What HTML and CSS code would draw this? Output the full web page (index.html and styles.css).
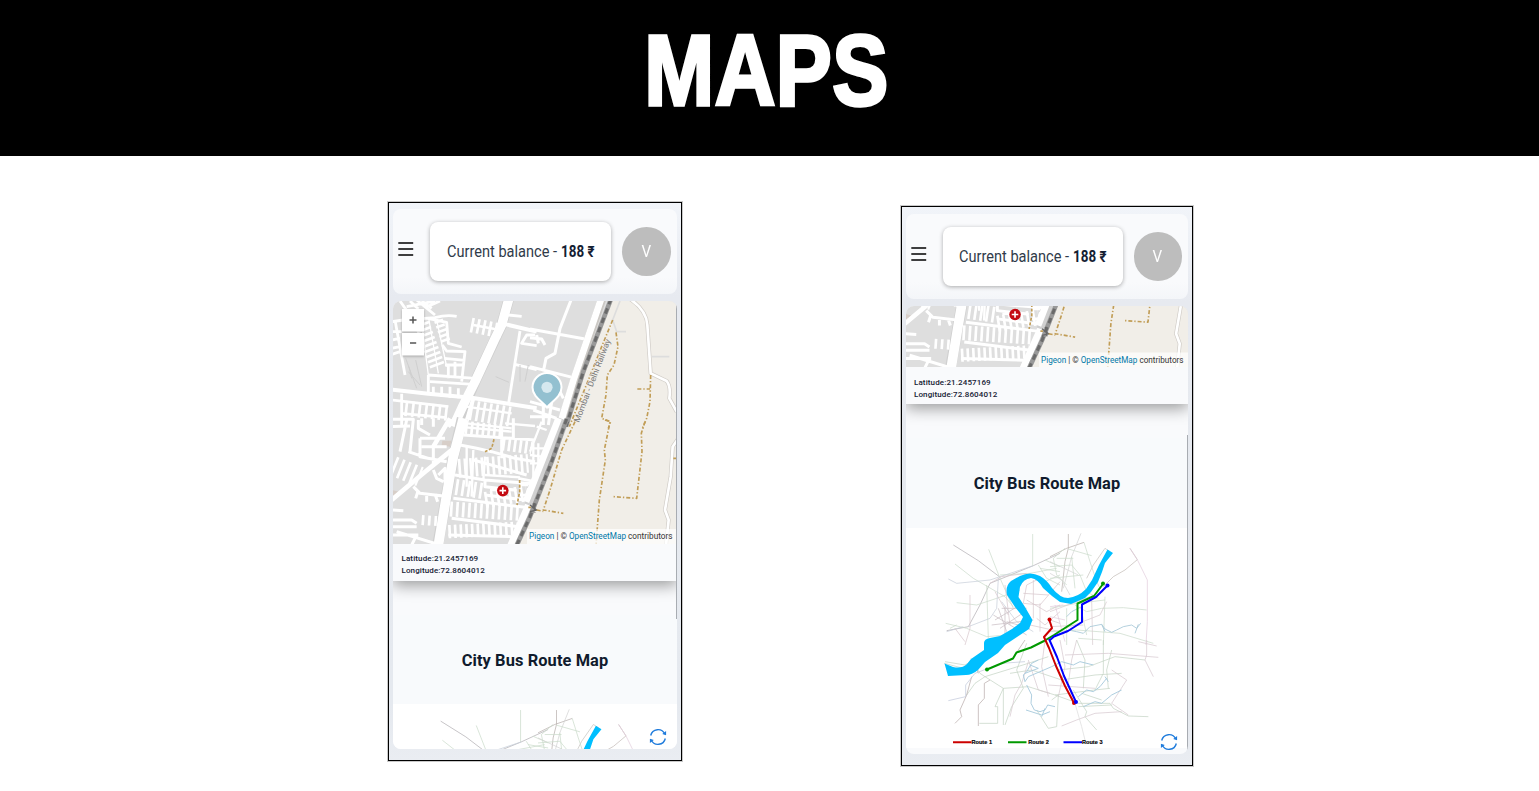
FILE: index.html
```html
<!DOCTYPE html>
<html lang="en">
<head>
<meta charset="utf-8">
<title>Maps</title>
<link rel="stylesheet" href="styles.css">
</head>
<body>
<svg class="defs" width="0" height="0" aria-hidden="true">
  <defs>
    <g id="street-map" fill="none" stroke-linejoin="round">
      <path fill="#dedede" d="M393 301H677V544H393z"/>
      <path fill="#f1eee8" d="M609 301H677V544H520L568 425z"/>
      <!-- north west -->
      <g transform="translate(385 295) scale(.33333)" stroke="#fff" stroke-width="8.5">
        <path stroke="#cfcfcf" stroke-width="32" d="M372 10L350 90L270 260L215 390"/>
        <path stroke-width="28" d="M372 10L350 90L328 135L270 260L235 330L205 395"/>
        <path stroke-width="12" d="M20 284L130 296L260 308L380 328L455 340M350 85L455 110M190 395L240 330M240 395L265 310"/>
        <path d="M20 80L55 75L150 68Q185 58 215 64M45 18L85 75M65 35L150 18M75 18L100 42M95 15L150 60M120 38L165 18M110 18L140 40M30 75L60 240M20 110H50M20 135L45 130M20 160L45 155M20 178L45 170M128 70L185 82L190 145L230 156M172 150L185 168L240 170L230 260M130 240L270 250M135 260L265 268M130 240L130 296M180 210H235M178 190L240 196M190 210V250M210 200V250M405 108L370 330M390 208L455 224M450 120H425L410 145L455 152M370 60L410 64M50 296V395M20 315L190 335M48 355L185 368M145 275V300M170 275V305M195 275V308M220 280V310"/>
        <path stroke-width="45" stroke-dasharray="8 8" d="M110 85L160 220"/>
        <path stroke-width="27" stroke-dasharray="8 7" d="M160 75L185 145"/>
        <path stroke-width="4" d="M110 85L130 240M132 75L160 235M155 75L185 215"/>
        <path stroke-width="44" stroke-dasharray="8 10" d="M258 90L350 108"/>
        <path stroke-width="7" d="M265 90L345 105"/>
        <path stroke-width="46" stroke-dasharray="8 12" d="M60 340L190 355"/>
        <path stroke-width="60" stroke-dasharray="8 11" d="M255 345L375 365"/>
        <path stroke-width="7" d="M245 335L380 355M245 385L380 400"/>
        <path stroke="#cfcfcf" stroke-width="3" d="M62 190L95 280M92 195L110 275M70 230L105 270M405 210V260M430 210L420 260M332 245L372 262M72 215L80 250"/>
      </g>
      <!-- north east -->
      <g transform="translate(530 295) scale(.33333)">
        <g stroke="#fff" stroke-width="9">
          <path d="M125 10L90 100L75 175L48 190L40 230M0 102L165 132M0 215L130 248M0 128L35 132L45 150M20 120L25 145M0 320L90 345M10 345L80 370M40 310V390M65 320L55 390M0 365H60M85 280L100 310"/>
          <path stroke="#cbc8c4" stroke-width="25" d="M217 10L135 250L92 395"/>
          <path stroke-width="20" d="M214 10L132 250L88 395"/>
          <path stroke="#d0ccc7" stroke-width="12" d="M297 10Q350 45 352 90L362 235L410 258Q423 275 418 310L440 350"/>
          <path stroke-width="8" d="M297 10Q350 45 352 90L362 235L410 258Q423 275 418 310L440 350"/>
        </g>
        <path stroke="#ddd" stroke-width="5" d="M270 18L248 75L260 110H288M365 185H418"/>
        <path stroke="#999" stroke-width="14" d="M243 12L160 230L108 395"/>
        <path stroke="#6a6a6a" stroke-width="9" stroke-dasharray="17 13" d="M243 12L160 230L108 395"/>
        <g stroke="#c19d56" stroke-width="5" stroke-dasharray="12 6 4 6">
          <path d="M248 75L215 155L165 280L118 395M258 112L264 155L252 210L232 240L228 300L215 370L242 380L235 400M362 240L360 320L350 370L337 400M322 282H360"/>
        </g>
        <text class="rail-label" transform="translate(147 384) rotate(-69)" textLength="265" lengthAdjust="spacingAndGlyphs">Mombai - Delhi Railway</text>
      </g>
      <!-- south west -->
      <g transform="translate(385 420) scale(.33333)" stroke="#fff" stroke-width="9">
        <path fill="#d7cec8" stroke="none" d="M172 62L200 62L195 80L170 76zM22 210L45 216L25 235z"/>
        <path stroke="#d0d0d0" stroke-width="33" d="M232 -5L205 110L185 225L158 376"/>
        <path stroke-width="29" d="M235 -5L205 110L185 225L160 376"/>
        <path stroke-width="14" d="M195 -5L145 80M20 240L115 160L210 82"/>
        <path d="M20 -2H85L75 95M65 0L45 95M20 20L75 18M100 0V25L135 45M110 -5V15M145 -5V20M105 55H180M105 55V110L185 125M145 75V130M110 80H185M70 95L130 115M235 45L450 60M225 75L275 85L320 95L390 115L450 125M350 20V115M385 -5V60M265 120L425 165M210 165L300 180L450 192M300 180V200L390 210M205 235L420 262M200 295L400 320M190 345L380 350M300 225L420 240M85 200L105 220L175 228M100 210L92 235M125 222V245M150 222L158 245M145 150L155 175L175 185M160 165L180 145V190M20 270L55 272M20 300H80L95 310M20 320H95M20 345H100M35 335L155 372M80 375L90 355"/>
        <path stroke-width="60" stroke-dasharray="8 12" d="M25 138L105 170"/>
        <path stroke-width="30" stroke-dasharray="8 11" d="M110 300L168 304"/>
        <path stroke-width="38" stroke-dasharray="8 9" d="M240 22L350 33M352 72L440 84"/>
        <path stroke-width="56" stroke-dasharray="8 9" d="M220 145L430 130"/>
        <path stroke-width="48" stroke-dasharray="8 10" d="M212 201L300 214M300 240L425 220"/>
        <path stroke-width="45" stroke-dasharray="8 10" d="M195 267L405 280"/>
        <path stroke-width="40" stroke-dasharray="8 9" d="M190 335L395 325"/>
        <path stroke-width="7" d="M245 80V200M265 90L260 230M300 110L295 180M220 20L380 35M360 10L450 18M300 165L405 172M315 210H395"/>
        <path stroke-width="20" d="M470 165L375 380"/>
        <path stroke-width="8" d="M405 195H430M405 225H430M400 175L450 185M430 205L420 240"/>
        <path stroke="#c19d56" stroke-width="5" stroke-dasharray="9 5" d="M327 58L320 85L300 95M404 180L404 215L396 255M430 262H450"/>
      </g>
      <!-- south east -->
      <g transform="translate(530 420) scale(.33333)">
        <path stroke="#fff" stroke-width="7" d="M0 85H45M0 105L35 110M0 130H30M35 5L0 95M20 20L50 30M10 60V170M25 70V130"/>
        <path stroke="#d0d0d0" stroke-width="24" d="M92 -5L-5 255"/>
        <path stroke="#fff" stroke-width="20" d="M86 -5L-12 245"/>
        <path stroke="#999" stroke-width="14" d="M110 -3L65 125L0 290L-40 376"/>
        <path stroke="#6a6a6a" stroke-width="9" stroke-dasharray="17 13" d="M110 -3L65 125L0 290L-40 376"/>
        <path stroke="#666" stroke-width="4" d="M0 255L20 270L0 275M10 250L15 278"/>
        <path stroke="#d0ccc7" stroke-width="12" d="M445 55L428 80L422 170L405 270L416 300L408 376"/>
        <path stroke="#fff" stroke-width="8" d="M445 55L428 80L422 170L405 270L416 300L408 376"/>
        <path stroke="#c19d56" stroke-width="5" stroke-dasharray="12 6 4 6" d="M135 5L95 90L60 210L40 270L100 280M20 270L40 274M225 0L240 5L223 90L226 120L208 240L198 376M345 5L334 40L336 95L320 235L250 230M430 115H442"/>
      </g>
      <circle cx="502.8" cy="490.6" r="5.8" fill="#c40b12"/>
      <path d="M499.5 490.6H506.1M502.8 487.3V493.9" stroke="#fff" stroke-width="1.6"/>
    </g>

    <g id="route-map" fill="none" stroke-linejoin="round">
      <!-- arterial roads and streams -->
      <g transform="translate(930 525) scale(.33333)" stroke-width="2.2">
        <path stroke="#b3b0b5" d="M70 60L145 107L208 155M50 317L115 305L150 240L180 175L310 122L390 85"/>
        <path stroke="#ccdccc" d="M176 73L208 155L250 250M308 27V122M75 117L130 160L225 215L250 245M80 233L140 240L200 220L270 195M47 295L110 310L170 335L230 330M210 150L300 145L380 130M170 180L175 340M325 120L350 160L390 180M330 130L390 140M345 105L390 125M345 170L390 150M60 310L80 300"/>
        <path stroke="#c8cfda" d="M55 162L80 175L180 165L310 122M205 160L200 250L180 280L115 305M50 320L100 305M215 230L260 290L310 320"/>
        <path stroke="#d8c8ce" d="M180 175L215 155L290 145M120 210V310L105 360M75 310L105 350M195 200L235 270M225 180L240 300M290 180L320 165L350 175L360 205L330 240L280 235L290 180M310 165V280M280 205L355 210M290 225L350 260L390 240M320 280L345 300L390 260M330 235V320M360 205L390 170M300 300L390 320M360 285L390 295"/>
        <path stroke="#c9bec4" d="M185 300L310 285M190 270L290 330M205 250L230 320M225 245V330M215 250H290M195 285L270 240M230 290L300 310M210 310L285 260"/>
      </g>
      <g transform="translate(1050 525) scale(.33333)" stroke-width="2.2">
        <path stroke="#b9b1ad" d="M0 95L50 70L102 52M55 27V70L45 110L35 200"/>
        <path stroke="#d4d4d4" d="M93 25L65 95L40 190M0 145L35 165L60 210M0 110L85 150"/>
        <path stroke="#c4bdb8" d="M160 185L190 155L225 135L262 104L240 70"/>
        <path stroke="#c8c4c0" d="M110 160L130 120L165 70L180 80"/>
        <path stroke="#ccdccc" d="M102 52L120 110L140 170L150 190M55 72L125 92M0 125L65 120L90 150L110 200M45 70L10 100L20 150L50 180M20 100H70M0 160L100 150M65 95L75 190M75 240L110 260L155 250L220 248L290 255M165 215L160 360M0 250L80 235L165 225M110 200L145 220M0 320L80 315L210 325L310 355M85 340L155 345M50 250V360M95 260L110 330"/>
        <path stroke="#e2cedd" d="M240 70L262 104L292 165V290L288 360M0 245L40 240M0 275L45 285M15 240L45 350"/>
        <path stroke="#d8ccd0" d="M125 225L128 360M0 260L160 200M20 320L150 270L170 230M0 305L100 300"/>
        <path stroke="#a8c8d8" stroke-width="2.6" d="M50 275L65 260L75 255L95 245M15 330L40 325L55 315L80 320L100 325L120 305L155 298L165 312L185 322L200 315L220 305L245 300L260 310L272 295M265 298L255 325M155 298L165 320"/>
      </g>
      <g transform="translate(895 640) scale(.33333)" stroke-width="2.2">
        <path stroke="#c6d4c6" d="M150 65L210 75L235 60L290 20M148 70L205 85L230 65M228 55L255 100L270 110L240 130L215 165M270 110L325 145L400 140L480 165L600 150L645 145M325 145V255M325 145L300 200H308V250H253M330 255L350 200L385 145L365 90L395 10M345 100L410 90L500 120L600 105L680 100M470 180L490 165L485 260L460 265L425 210M535 150L575 215L570 230L605 270M480 165L550 190H645L655 205L700 228L760 230M560 160L620 180M550 200L650 195M600 150L625 100V0M640 145L635 90L650 30M545 0L570 60L565 145M490 90L580 80L660 50L750 60M270 110L400 70L460 50"/>
        <path stroke="#b9adab" d="M230 110L215 165L195 210L200 230L180 250M285 120L268 130V175L250 195V258M350 60L390 0M235 60L250 100"/>
        <path stroke="#d7c9d1" d="M400 65L380 130L360 165L345 230M400 60L430 150L465 160M450 0L440 80L460 170M495 0L510 80L490 170M545 0L530 60L520 130M730 5L785 18M755 0V45L750 60L775 110M650 90L695 120L650 190L700 225M500 258L545 240L600 220L680 215M460 135L600 145M510 45L640 40L790 52"/>
        <path stroke="#ddd" d="M540 190L560 260L570 300"/>
        <path stroke="#c2c9dc" d="M160 182L212 170V135L240 100L320 70L390 65M270 20L325 0M230 70L340 5"/>
        <path stroke="#a8cadd" stroke-width="2.8" d="M430 60L410 70L395 95L385 105L390 125L400 110L435 95L470 80L500 65L535 75L555 65L595 75M395 135L410 165L408 190L418 210L435 215L450 210L458 195L480 200M393 210L440 225L465 215M550 170L575 150L595 155L615 140L635 115M565 200L600 185L620 190L650 165L680 150M390 100L430 85L405 75M440 230L450 205M630 110L640 125"/>
      </g>
      <!-- river -->
      <path fill="#00bfff" d="M944.5 663.5L953 667Q962 669 967 664L971 659L984 650L984 643Q984 639 990 638L1000 636L1012 629L1020 623L1023 617L1015 607L1007 595Q1005 586 1011 581L1020 576Q1030 571 1040 576Q1047 580 1052 588Q1060 598 1068 598Q1078 597 1086 589L1092 580L1099 565L1107.5 549.5L1113 553L1105 563L1102 572L1098 582L1091 592L1085 598L1071 604L1060 602L1052 596L1043 588Q1038 579 1031 578Q1023 579 1020 587L1018.5 597L1025 607L1032.5 620L1029 629L1017 637L1005 645L998 653L985 662L978 670Q972 675 966 675L948 676z"/>
      <g stroke-width="2">
        <path stroke="#090" d="M987 669.5L1013 658.5L1016.5 652.5L1031 647.5L1044 641L1054 635L1077.5 620V603.5L1094 596L1103 584"/>
        <path stroke="#00f" d="M1050 640L1054 636.5L1068 631L1082 622V604.5L1096 597L1107 586M1049 639L1057 657L1064 676L1076 702"/>
        <path stroke="#c00" d="M1049 619L1052 628L1044 637L1049 648L1056 666L1065 686L1074 703"/>
        <circle cx="987" cy="669.5" r="2" fill="#090" stroke="none"/><circle cx="1103" cy="583.5" r="2" fill="#090" stroke="none"/>
        <circle cx="1107.5" cy="585.5" r="2" fill="#00f" stroke="none"/><circle cx="1049.5" cy="619.5" r="2" fill="#c00" stroke="none"/>
        <circle cx="1074" cy="703" r="2" fill="#c00" stroke="none"/><circle cx="1076" cy="702" r="2" fill="#00f" stroke="none"/>
        <path stroke="#c00" d="M953 742.3H971.5"/><path stroke="#090" d="M1008 742.3H1026.5"/><path stroke="#00f" d="M1063.5 742.3H1082"/>
      </g>
      <g class="legend-text">
        <text x="971.5" y="744.3" textLength="20.5" lengthAdjust="spacingAndGlyphs">Route 1</text>
        <text x="1028.3" y="744.3" textLength="20.5" lengthAdjust="spacingAndGlyphs">Route 2</text>
        <text x="1082" y="744.3" textLength="20.5" lengthAdjust="spacingAndGlyphs">Route 3</text>
      </g>
    </g>

    <g id="refresh" fill="none" stroke="#207cdc" stroke-width="1.4">
      <path d="M1.7 7.5A7.5 7.5 0 0 1 15.8 6M16.3 10.5A7.5 7.5 0 0 1 2.2 12"/>
      <path fill="#207cdc" stroke="none" d="M17.1 3V7.2L13.2 6zM.9 15V10.8L4.8 12z"/>
    </g>
  </defs>
</svg>

<header class="banner"><h1>MAPS</h1></header>

<main class="screens">
  <section class="phone phone-top">
    <div class="appbar">
      <svg class="menu" viewBox="0 0 16 14"><path d="M.3 1H15.2M.3 7H15.2M.3 13H15.2"/></svg>
      <div class="balance"><svg viewBox="0 0 148 20"><text x="0" y="15" textLength="110" lengthAdjust="spacingAndGlyphs">Current balance -</text><text class="strong" x="114" y="15" textLength="33.5" lengthAdjust="spacingAndGlyphs">188 ₹</text></svg></div>
      <div class="avatar"><span>V</span></div>
    </div>
    <div class="content">
      <svg class="map" viewBox="393 301 284 243" preserveAspectRatio="none">
        <use href="#street-map"/>
        <g class="zoom-buttons"><path d="M402 309H424V331.5H402zM402 333H424V355.5H402z"/></g>
        <path d="M409.5 320H416.5M413 316.5V323.5M410 343H416.2" stroke="#555" stroke-width="1.5"/>
        <path d="M547 407.5C543 402 532.5 397 532.5 387.5A14.4 14.4 0 0 1 561.5 387.5C561.5 397 551 402 547 407.5z" fill="#93c0d0" stroke="#fff" stroke-width="2"/>
        <circle cx="547" cy="387.3" r="5.6" fill="#d5e8ef"/>
        <path d="M527 529H677V544H527z" fill="#fff" fill-opacity=".7"/>
        <text class="credit" x="529" y="539.3" textLength="143.5" lengthAdjust="spacingAndGlyphs"><tspan class="link">Pigeon</tspan> | © <tspan class="link">OpenStreetMap</tspan> contributors</text>
      </svg>
      <div class="coords"><div>Latitude:21.2457169</div><div>Longitude:72.8604012</div></div>
      <div class="heading"><h2>City Bus Route Map</h2></div>
      <div class="route"><svg viewBox="906 528 282 44.7" preserveAspectRatio="none"><use href="#route-map"/></svg></div>
      <svg class="refresh" viewBox="0 0 18 18"><use href="#refresh"/></svg>
      <i class="scrollbar"></i>
    </div>
  </section>

  <section class="phone phone-scrolled">
    <div class="appbar">
      <svg class="menu" viewBox="0 0 16 14"><path d="M.3 1H15.2M.3 7H15.2M.3 13H15.2"/></svg>
      <div class="balance"><svg viewBox="0 0 148 20"><text x="0" y="15" textLength="110" lengthAdjust="spacingAndGlyphs">Current balance -</text><text class="strong" x="114" y="15" textLength="33.5" lengthAdjust="spacingAndGlyphs">188 ₹</text></svg></div>
      <div class="avatar"><span>V</span></div>
    </div>
    <div class="content">
      <svg class="map" viewBox="393 482 284 61.5" preserveAspectRatio="none">
        <use href="#street-map"/>
        <path d="M527 529H677V544H527z" fill="#fff" fill-opacity=".7"/>
        <text class="credit" x="529" y="539.3" textLength="143.5" lengthAdjust="spacingAndGlyphs"><tspan class="link">Pigeon</tspan> | © <tspan class="link">OpenStreetMap</tspan> contributors</text>
      </svg>
      <div class="coords"><div>Latitude:21.2457169</div><div>Longitude:72.8604012</div></div>
      <div class="heading"><h2>City Bus Route Map</h2></div>
      <div class="route"><svg viewBox="906 528 282 220" preserveAspectRatio="none"><use href="#route-map"/></svg></div>
      <svg class="refresh" viewBox="0 0 18 18"><use href="#refresh"/></svg>
      <i class="scrollbar"></i>
    </div>
  </section>
</main>
</body>
</html>
```
FILE: styles.css
```css
* { box-sizing: border-box; }
body { margin: 0; height: 791px; overflow: hidden; background: #fff; font-family: Roboto, sans-serif; }
svg { display: block; }
.defs { position: absolute; }

.banner { height: 156px; background: #000; display: flex; justify-content: center; padding: 20px 6px 0 0; }
.banner h1 {
  margin: 0; color: #fff; font: bold 100px/100px "Liberation Sans", Arial, sans-serif;
  -webkit-text-stroke: 3.4px #fff; letter-spacing: .5px; transform: scaleX(.84);
}

.screens { display: flex; align-items: flex-start; gap: 219px; padding: 46px 0 0 388px; }
.phone {
  flex: none; width: 294px; height: 559px; border: 1px solid #000; outline: 1px solid #c9c9c9;
  padding: 6px 4px 0; background: linear-gradient(#f1f4f9, #e7eaf0 17%, #e5e9ef 90%, #eaedf2);
}
.phone-scrolled { width: 292px; height: 560px; margin-top: 4px; padding-top: 7px; }

.appbar {
  display: flex; align-items: center; height: 85px; padding: 0 6px 0 5px;
  border-radius: 8px; background: linear-gradient(#f9fafc 80%, #f4f6f9);
}
.menu { width: 16px; height: 14px; margin: -6px 16px 0 0; flex: none; fill: none; stroke: #000; stroke-width: 1.5; }
.balance {
  flex: none; width: 181px; height: 59px; padding: 20px 16px 0 17px; border-radius: 8px; background: #fff;
  box-shadow: 0 1px 4px rgba(0, 0, 0, .32);
}
.balance svg { width: 148px; height: 20px; }
.balance text { font-size: 15.6px; fill: #303b4a; }
.balance .strong { font-weight: 700; fill: #142033; }
.avatar {
  flex: none; width: 49px; height: 49px; margin-left: 11px; border-radius: 50%; background: #bdbdbd;
  color: #fff; display: flex; align-items: center; justify-content: center; font-size: 16.5px;
}
.avatar span { transform: scaleX(.92); }
.phone-scrolled .menu { margin-right: 15.5px; }
.phone-scrolled .balance { width: 180px; padding-left: 16px; }
.phone-scrolled .avatar { width: 48.5px; height: 48.5px; }

.content {
  position: relative; margin-top: 7px; height: 448px; overflow: hidden; border-radius: 8px;
  background: #f9fafc;
}
.map { width: 100%; height: 243px; }
.phone-scrolled .map { height: 61px; }
.rail-label { font-size: 25px; fill: #777; stroke: #f1eee8; stroke-width: 2px; paint-order: stroke; }
.zoom-buttons { fill: #fff; filter: drop-shadow(0 1px 1px rgba(0, 0, 0, .25)); }
.credit { font-size: 8.5px; fill: #333; }
.link { fill: #0078a8; }
.coords {
  height: 37px; padding: 8.5px 8.5px 0; background: #f9fafc; color: #142033;
  font-size: 8px; font-weight: 500; line-height: 12px; letter-spacing: .12px;
  box-shadow: 0 4px 16px rgba(0, 0, 0, .4);
}
.heading { height: 123px; padding-top: 34px; }
.heading h2 {
  margin: 0; height: 89px; background: #f8fafc; text-align: center; color: #101b2d;
  font-size: 16.4px; font-weight: 700; line-height: 91px; letter-spacing: .1px;
}
.phone-scrolled .coords { padding: 10px 8px 0; }
.phone-scrolled .heading { height: 124px; }
.phone-scrolled .heading h2 { height: 90px; line-height: 92px; }
.route { height: 45px; background: #fff; }
.route svg { width: 100%; height: 100%; }
.phone-scrolled .route { height: 220px; }
.legend-text { font: bold 5.6px "Liberation Sans", Arial, sans-serif; fill: #000; stroke: #000; stroke-width: .15px; }
.refresh { position: absolute; right: 10px; bottom: 3px; width: 18px; height: 18px; }
.scrollbar { position: absolute; right: 0; top: 0; width: 1px; height: 318px; background: #a8acb2; }
.phone-scrolled .scrollbar { top: 129px; height: 319px; }
```
